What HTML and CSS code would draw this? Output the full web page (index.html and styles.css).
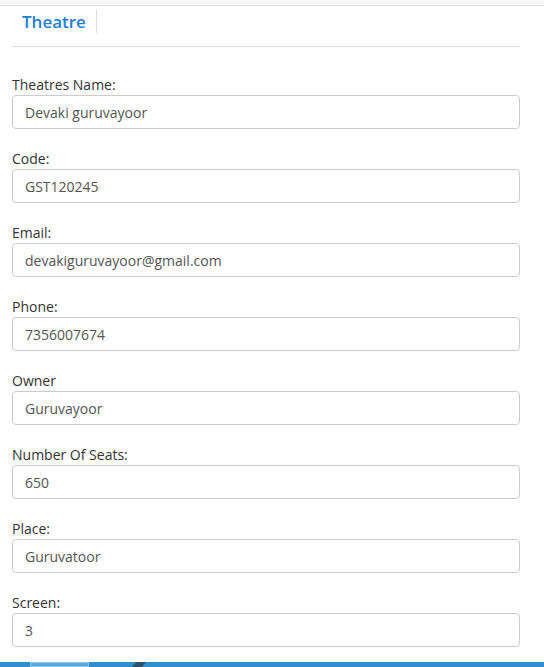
FILE: index.html
```html
<!DOCTYPE html>
<html lang="en">
<head>
<meta charset="utf-8">
<title>Theatre</title>
<link rel="stylesheet" href="styles.css">
</head>
<body>
<div class="topstrip"></div>
<div class="page">
  <nav class="tabs">
    <a class="tab active">Theatre</a>
  </nav>
  <form class="form">
    <div class="group">
      <label class="label">Theatres Name:</label>
      <input class="input" type="text" value="Devaki guruvayoor">
    </div>
    <div class="group">
      <label class="label">Code:</label>
      <input class="input" type="text" value="GST120245">
    </div>
    <div class="group">
      <label class="label">Email:</label>
      <input class="input" type="text" value="devakiguruvayoor@gmail.com">
    </div>
    <div class="group">
      <label class="label">Phone:</label>
      <input class="input" type="text" value="7356007674">
    </div>
    <div class="group">
      <label class="label">Owner</label>
      <input class="input" type="text" value="Guruvayoor">
    </div>
    <div class="group">
      <label class="label">Number Of Seats:</label>
      <input class="input" type="text" value="650">
    </div>
    <div class="group">
      <label class="label">Place:</label>
      <input class="input" type="text" value="Guruvatoor">
    </div>
    <div class="group">
      <label class="label">Screen:</label>
      <input class="input" type="text" value="3">
    </div>
  </form>
</div>
<div class="taskbar">
  <div class="task-btn"></div>
  <div class="task-slash"></div>
</div>
</body>
</html>
```
FILE: styles.css
```css
html, body {
  margin: 0;
  padding: 0;
  background: #ffffff;
  font-family: "Open Sans", "Liberation Sans", sans-serif;
  color: #333333;
  overflow: hidden;
}
.topstrip {
  height: 5px;
  background: #f6f6f6;
  border-bottom: 1px solid #e2e2e2;
}
.page {
  width: 508px;
  margin-left: 12px;
}
.tabs {
  display: flex;
  padding-top: 4px;
  padding-bottom: 13px;
  border-bottom: 1px solid #dddddd;
}
.tab {
  display: block;
  padding: 0 10px;
  line-height: 23px;
  font-size: 17px;
  font-weight: 600;
  color: #1f7fd4;
  border-right: 1px solid #dddddd;
}
.form {
  padding-top: 28px;
}
.group {
  display: flex;
  flex-direction: column;
  margin-bottom: 20px;
}
.label {
  font-size: 14px;
  line-height: 20px;
  color: #333333;
}
.input {
  box-sizing: border-box;
  height: 34px;
  width: 100%;
  margin: 0;
  padding: 0 12px;
  border: 1px solid #cccccc;
  border-radius: 4px;
  font-family: "Open Sans", "Liberation Sans", sans-serif;
  font-size: 14px;
  color: #555555;
  background: #ffffff;
  outline: none;
}
.taskbar {
  position: fixed;
  left: 0;
  right: 0;
  bottom: 0;
  height: 5px;
  background: #2f8ecb;
}
.task-btn {
  position: absolute;
  left: 30px;
  top: 0;
  width: 59px;
  height: 5px;
  background: #5aa9d8;
  border: 1px solid #8cc4e6;
  box-sizing: border-box;
}
.task-slash {
  position: absolute;
  left: 134px;
  top: 0;
  width: 10px;
  height: 5px;
  background: #30506a;
  transform: skewX(-40deg);
}
```
